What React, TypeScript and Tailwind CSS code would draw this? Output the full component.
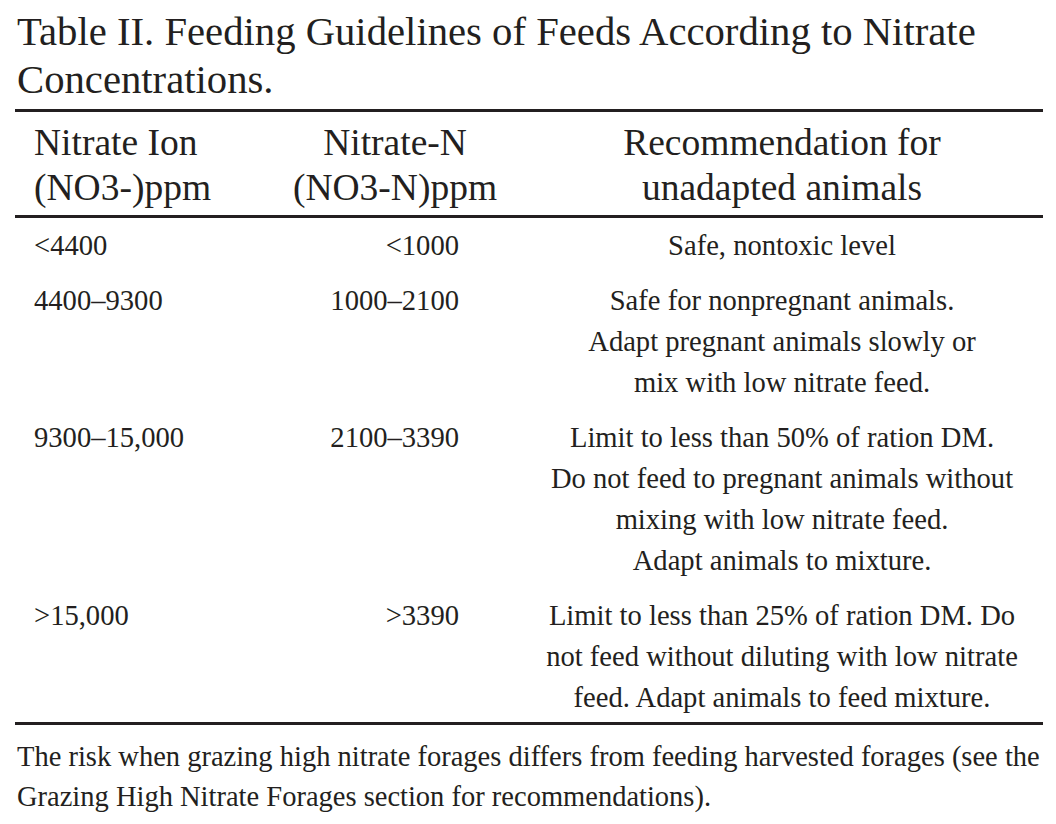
import React from "react";

const rows = [
  {
    ion: "<4400",
    n: "<1000",
    rec: ["Safe, nontoxic level"],
  },
  {
    ion: "4400–9300",
    n: "1000–2100",
    rec: [
      "Safe for nonpregnant animals.",
      "Adapt pregnant animals slowly or",
      "mix with low nitrate feed.",
    ],
  },
  {
    ion: "9300–15,000",
    n: "2100–3390",
    rec: [
      "Limit to less than 50% of ration DM.",
      "Do not feed to pregnant animals without",
      "mixing with low nitrate feed.",
      "Adapt animals to mixture.",
    ],
  },
  {
    ion: ">15,000",
    n: ">3390",
    rec: [
      "Limit to less than 25% of ration DM. Do",
      "not feed without diluting with low nitrate",
      "feed. Adapt animals to feed mixture.",
    ],
  },
];

export default function App() {
  return (
    <div
      className="w-[1056px] h-[824px] bg-white text-[#231f20] overflow-hidden"
      style={{ fontFamily: '"Liberation Serif", "Times New Roman", serif' }}
    >
      {/* caption */}
      <h1 className="pt-[8px] ml-[17px] text-[40.7px] leading-[48px] font-normal whitespace-nowrap">
        Table II. Feeding Guidelines of Feeds According to Nitrate
        <br />
        Concentrations.
      </h1>

      <div className="ml-[15px] w-[1028px] mt-[5px]">
        <div className="h-[3px] bg-[#231f20]" />

        {/* header */}
        <div className="grid grid-cols-[285px_190px_1fr] pt-[8px] pb-[5px] text-[37.5px] leading-[45px] whitespace-nowrap">
          <div className="pl-[19px]">
            Nitrate Ion
            <br />
            (NO3-)ppm
          </div>
          <div className="flex flex-col items-center">
            <span>Nitrate-N</span>
            <span>(NO3-N)ppm</span>
          </div>
          <div className="pl-[31px] text-center">
            Recommendation for
            <br />
            unadapted animals
          </div>
        </div>

        <div className="h-[3px] bg-[#231f20]" />

        {/* body */}
        <div className="flex flex-col gap-[14px] pt-[7px] pb-[4px] text-[28.6px] leading-[41px] whitespace-nowrap">
          {rows.map((r) => (
            <div key={r.ion} className="grid grid-cols-[285px_190px_1fr]">
              <div className="pl-[19px]">{r.ion}</div>
              <div className="pr-[31px] text-right">{r.n}</div>
              <div className="pl-[31px] flex flex-col items-center">
                {r.rec.map((line) => (
                  <span key={line}>{line}</span>
                ))}
              </div>
            </div>
          ))}
        </div>

        <div className="h-[3px] bg-[#231f20]" />
      </div>

      {/* footnote */}
      <p className="mt-[12px] ml-[17px] text-[28.5px] leading-[40px] whitespace-nowrap">
        The risk when grazing high nitrate forages differs from feeding harvested forages (see the
        <br />
        Grazing High Nitrate Forages section for recommendations).
      </p>
    </div>
  );
}
